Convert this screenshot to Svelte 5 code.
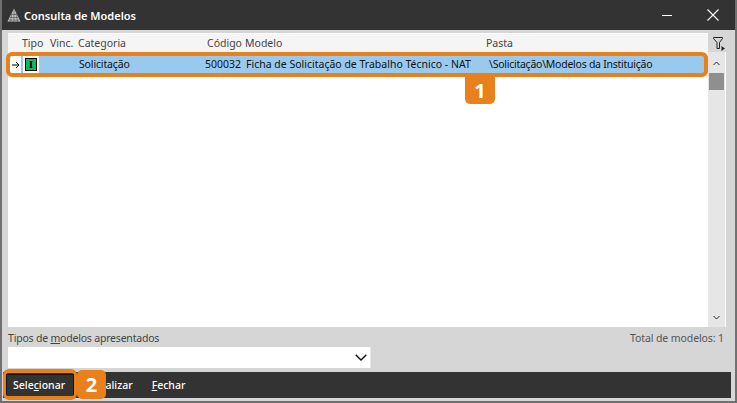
<script>
	const columns = [
		{ label: 'Tipo', cls: 'c-tipo' },
		{ label: 'Vinc.', cls: 'c-vinc' },
		{ label: 'Categoria', cls: 'c-cat' },
		{ label: 'Código', cls: 'c-cod' },
		{ label: 'Modelo', cls: 'c-mod' },
		{ label: 'Pasta', cls: 'c-pasta' }
	];
</script>

<div class="window">
	<header class="titlebar">
		<svg class="logo" width="14" height="14" viewBox="0 0 14 14" aria-hidden="true">
			<path d="M7 0.5 L13.5 13.5 H0.5 Z" fill="#c4c4c4" />
			<path d="M7 1 V13.5 M5 5 L3.5 13.5 M9 5 L10.5 13.5 M4.5 6.5 H9.5 M3 9.5 H11 M1.8 12 H12.2" stroke="#4a4a4a" stroke-width="0.6" fill="none" />
		</svg>
		<span class="title">Consulta de Modelos</span>
		<svg class="min" width="10" height="12" viewBox="0 0 10 12" aria-hidden="true">
			<path d="M0 6.5 H10" stroke="#fff" stroke-width="1" />
		</svg>
		<svg class="close" width="12" height="12" viewBox="0 0 12 12" aria-hidden="true">
			<path d="M0.5 0.5 L11.5 11.5 M11.5 0.5 L0.5 11.5" stroke="#fff" stroke-width="1.1" />
		</svg>
	</header>

	<main class="content">
		<div class="grid-area">
			<div class="head-row">
				<div class="head">
					{#each columns as col}
						<span class={col.cls}>{col.label}</span>
					{/each}
				</div>
				<svg class="filter" width="13" height="14" viewBox="0 0 13 14" aria-hidden="true">
					<path d="M0.5 0.5 H9.5 V1.5 L6.5 5.5 V11.5 H4 V5.5 L0.5 1.5 Z" stroke="#222" stroke-width="1" fill="none" />
					<path d="M8.5 9 L12 11.5 L8.5 14 Z" fill="#222" />
				</svg>
			</div>
			<div class="body">
				<div class="rows">
					<div class="row">
						<span class="pointer">
							<svg width="8" height="8" viewBox="0 0 8 8" aria-hidden="true">
								<path d="M0 4 H7 M4 1 L7 4 L4 7" stroke="#000" stroke-width="1" fill="none" />
							</svg>
						</span>
						<span class="type-cell"><span class="type-icon">I</span></span>
						<span class="cell c-cat">Solicitação</span>
						<span class="cell c-cod">500032</span>
						<span class="cell c-mod">Ficha de Solicitação de Trabalho Técnico - NAT</span>
						<span class="cell c-pasta">\Solicitação\Modelos da Instituição</span>
					</div>
				</div>
				<div class="scrollbar">
					<svg class="up" width="7" height="5" viewBox="0 0 7 5" aria-hidden="true">
						<path d="M0.5 4 L3.5 1 L6.5 4" stroke="#222" stroke-width="1" fill="none" />
					</svg>
					<div class="thumb"></div>
					<svg class="down" width="7" height="5" viewBox="0 0 7 5" aria-hidden="true">
						<path d="M0.5 1 L3.5 4 L6.5 1" stroke="#222" stroke-width="1" fill="none" />
					</svg>
				</div>
			</div>
		</div>

		<div class="filter-row">
			<div class="filter-left">
				<label class="filter-label" for="tipos">Tipos de <u>m</u>odelos apresentados</label>
				<div class="select" id="tipos">
					<svg width="12" height="7" viewBox="0 0 12 7" aria-hidden="true">
						<path d="M0.7 0.7 L6 6 L11.3 0.7" stroke="#111" stroke-width="1.4" fill="none" />
					</svg>
				</div>
			</div>
			<span class="total">Total de modelos: 1</span>
		</div>

		<nav class="toolbar">
			<button class="btn selected">Sele<u>c</u>ionar</button>
			<button class="btn"><u>A</u>tualizar</button>
			<button class="btn"><u>F</u>echar</button>
		</nav>
	</main>

	<div class="highlight hl-row"></div>
	<div class="badge b-one">1</div>
	<div class="highlight hl-btn"></div>
	<div class="badge b-two">2</div>
</div>

<style>
	:global(body) {
		margin: 0;
	}

	.window {
		position: relative;
		width: 737px;
		height: 403px;
		box-sizing: border-box;
		background: #d6d6d6;
		border-left: 2px solid #707070;
		border-right: 2px solid #707070;
		border-bottom: 2px solid #707070;
		font-family: "Noto Sans", sans-serif;
		font-size: 10.5px;
		color: #333;
		overflow: hidden;
		display: flex;
		flex-direction: column;
	}

	.titlebar {
		height: 30px;
		margin: 0 -2px;
		padding: 0 18px 0 7px;
		background: #333;
		display: flex;
		align-items: center;
		flex-shrink: 0;
	}

	.logo {
		margin-right: 3px;
	}

	.title {
		color: #fff;
		font-size: 11px;
		font-weight: 600;
		flex: 1;
	}

	.min {
		margin-right: 35px;
	}

	.content {
		flex: 1;
		display: flex;
		flex-direction: column;
		min-height: 0;
	}

	.grid-area {
		display: flex;
		flex-direction: column;
		height: 297px;
		padding: 3px 0 0 6px;
		box-sizing: border-box;
	}

	.head-row {
		display: flex;
		height: 19px;
		flex-shrink: 0;
	}

	.head {
		width: 700px;
		position: relative;
		background: #f5f5f5;
		border-top: 1px solid #fff;
		box-sizing: border-box;
		color: #444;
	}

	.filter {
		margin: 4px 0 0 5px;
	}

	.head span,
	.cell {
		position: absolute;
		white-space: nowrap;
	}

	.head span {
		top: 2px;
	}

	.head .c-tipo { left: 14px; }
	.head .c-vinc { left: 42px; }
	.head .c-cat { left: 70px; }
	.head .c-cod { left: 199px; }
	.head .c-mod { left: 237px; }
	.head .c-pasta { left: 478px; }

	.body {
		flex: 1;
		display: flex;
		min-height: 0;
		width: 718px;
		box-sizing: border-box;
		background: #fff;
		border-right: 1px solid #fff;
	}

	.rows {
		width: 700px;
		padding-top: 4px;
	}

	.row {
		position: relative;
		height: 17px;
		background: #9ac9ee;
		color: #111;
	}

	.pointer {
		position: absolute;
		left: 0;
		top: 0;
		width: 13px;
		height: 17px;
		padding-left: 3px;
		box-sizing: border-box;
		background: #fff;
		display: flex;
		align-items: center;
		justify-content: center;
	}

	.type-cell {
		position: absolute;
		left: 15px;
		top: 0;
		width: 16px;
		height: 17px;
		background: #fff;
		display: flex;
		align-items: center;
		justify-content: center;
	}

	.type-icon {
		width: 12px;
		height: 13px;
		box-sizing: border-box;
		background: #17b562;
		border: 1px solid #000;
		display: flex;
		align-items: center;
		justify-content: center;
		font-family: "Liberation Serif", serif;
		font-weight: 700;
		font-size: 11px;
		line-height: 1;
		color: #000;
	}

	.cell {
		top: 1px;
	}

	.cell.c-cat { left: 71px; letter-spacing: -0.15px; }
	.cell.c-cod { left: 197px; }
	.cell.c-mod { left: 238px; }
	.cell.c-pasta { left: 481px; letter-spacing: -0.25px; }

	.scrollbar {
		width: 17px;
		background: #e6e6e6;
		position: relative;
	}

	.up {
		position: absolute;
		left: 5px;
		top: 9px;
	}

	.thumb {
		position: absolute;
		top: 21px;
		left: 1px;
		width: 15px;
		height: 17px;
		background: #8f8f8f;
	}

	.down {
		position: absolute;
		left: 5px;
		bottom: 7px;
	}

	.filter-row {
		height: 45px;
		padding: 4px 11px 0 6px;
		box-sizing: border-box;
		display: flex;
		justify-content: space-between;
		align-items: flex-start;
	}

	.filter-label {
		display: block;
		color: #444;
		height: 16px;
		letter-spacing: -0.2px;
	}

	.select {
		width: 363px;
		height: 21px;
		background: #fff;
		border-right: 1px solid #e8e8e8;
		display: flex;
		align-items: center;
		justify-content: flex-end;
		padding-right: 3px;
		box-sizing: border-box;
	}

	.total {
		color: #555;
		letter-spacing: -0.1px;
	}

	.toolbar {
		height: 26px;
		width: 728px;
		margin-left: 1px;
		background: #333;
		display: flex;
		align-items: center;
		gap: 1px;
		flex-shrink: 0;
	}

	.btn {
		all: unset;
		color: #fff;
		font-size: 10.5px;
		padding: 0 9px;
		height: 26px;
		display: inline-flex;
		align-items: center;
		white-space: nowrap;
		font-weight: 500;
	}

	.btn.selected {
		box-sizing: border-box;
		margin: 0 4px 0 3px;
		padding: 0 6px;
		width: 68px;
		height: 23px;
		border: 1px solid #111;
	}

	.highlight {
		position: absolute;
		box-sizing: border-box;
		border: 4px solid #e8801c;
		border-radius: 6px;
	}

	.hl-row {
		left: 4px;
		top: 52px;
		width: 702px;
		height: 25px;
	}

	.hl-btn {
		left: 1px;
		top: 369px;
		width: 74px;
		height: 31px;
		border-width: 4px 3px;
	}

	.badge {
		position: absolute;
		background: #e8801c;
		color: #fff;
		font-family: "Open Sans", sans-serif;
		font-weight: 700;
		font-size: 20px;
		display: flex;
		align-items: center;
		justify-content: center;
		border-radius: 5px;
	}

	.b-one {
		left: 463px;
		top: 76px;
		width: 30px;
		height: 28px;
		border-radius: 0 0 5px 5px;
	}

	.b-two {
		left: 75px;
		top: 370px;
		width: 29px;
		height: 29px;
	}
</style>
